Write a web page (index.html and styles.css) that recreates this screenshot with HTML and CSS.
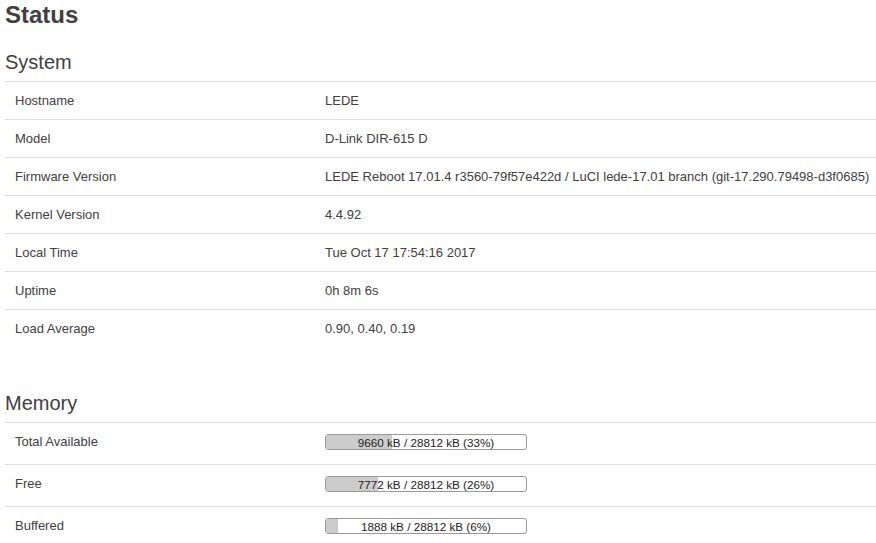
FILE: index.html
```html
<!DOCTYPE html>
<html>
<head>
<meta charset="utf-8">
<link rel="stylesheet" href="styles.css">
</head>
<body>
<div class="page">
  <h2 class="title">Status</h2>

  <h3 class="section-title">System</h3>
  <div class="table">
    <div class="row"><div class="key">Hostname</div><div class="val">LEDE</div></div>
    <div class="row"><div class="key">Model</div><div class="val">D-Link DIR-615 D</div></div>
    <div class="row"><div class="key">Firmware Version</div><div class="val">LEDE Reboot 17.01.4 r3560-79f57e422d / LuCI lede-17.01 branch (git-17.290.79498-d3f0685)</div></div>
    <div class="row"><div class="key">Kernel Version</div><div class="val">4.4.92</div></div>
    <div class="row"><div class="key">Local Time</div><div class="val">Tue Oct 17 17:54:16 2017</div></div>
    <div class="row"><div class="key">Uptime</div><div class="val">0h 8m 6s</div></div>
    <div class="row"><div class="key">Load Average</div><div class="val">0.90, 0.40, 0.19</div></div>
  </div>

  <h3 class="section-title memory">Memory</h3>
  <div class="table">
    <div class="row bar-row"><div class="key">Total Available</div><div class="val"><div class="bar"><div class="fill" style="width:33%"></div><span class="bar-text">9660 kB / 28812 kB (33%)</span></div></div></div>
    <div class="row bar-row"><div class="key">Free</div><div class="val"><div class="bar"><div class="fill" style="width:26%"></div><span class="bar-text">7772 kB / 28812 kB (26%)</span></div></div></div>
    <div class="row bar-row"><div class="key">Buffered</div><div class="val"><div class="bar"><div class="fill" style="width:6%"></div><span class="bar-text">1888 kB / 28812 kB (6%)</span></div></div></div>
  </div>
</div>
</body>
</html>
```

FILE: styles.css
```css
html, body {
  margin: 0;
  padding: 0;
  background: #fff;
}

* {
  box-sizing: border-box;
}

body {
  font-family: "Liberation Sans", Arial, sans-serif;
  font-size: 13px;
  color: #404040;
}

.page {
  padding: 1px 0 0 5px;
}

.title {
  margin: 0 0 23px;
  font-size: 24px;
  line-height: 27px;
  font-weight: bold;
  color: #404040;
}

.section-title {
  margin: 0 0 7px;
  font-size: 20px;
  line-height: 23px;
  font-weight: normal;
  color: #404040;
}

.section-title.memory {
  margin-top: 45px;
}

.table {
  display: flex;
  flex-direction: column;
}

.row {
  display: flex;
  border-top: 1px solid #ddd;
}

.key {
  width: 310px;
  flex: none;
  padding: 10px;
  line-height: 17px;
  white-space: nowrap;
}

.val {
  flex: 1;
  padding: 10px;
  line-height: 17px;
  white-space: nowrap;
}

.bar-row .key,
.bar-row .val {
  padding: 10px 10px 14px;
}

.bar-row .val {
  padding-top: 11px;
}

.bar {
  position: relative;
  width: 202px;
  height: 16px;
  border: 1px solid #999;
  border-radius: 3px;
  overflow: hidden;
  background: #fff;
}

.fill {
  height: 100%;
  background: #ccc;
}

.bar-text {
  position: absolute;
  left: 0;
  right: 0;
  top: 0;
  text-align: center;
  font-size: 11.7px;
  line-height: 15px;
  color: #222;
}
```
